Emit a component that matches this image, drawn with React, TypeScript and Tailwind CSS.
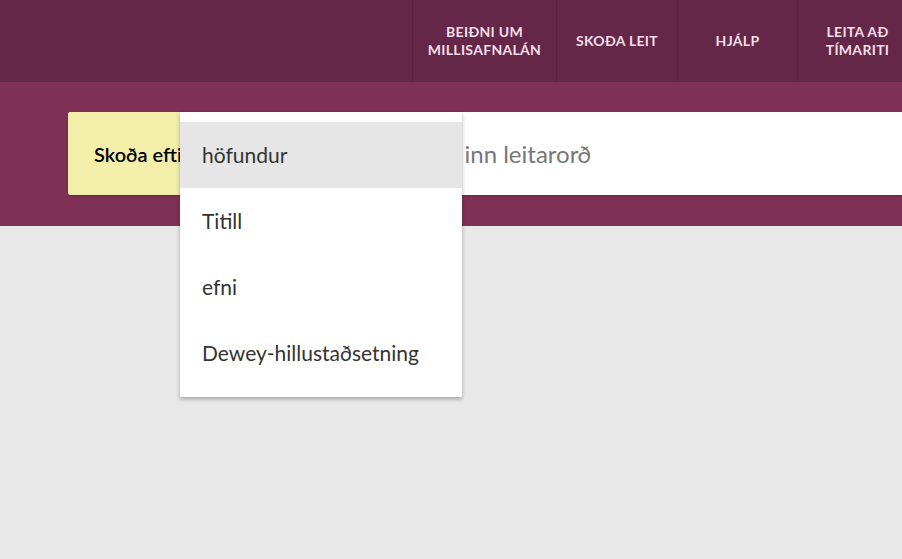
import { useState } from "react";

const navItems = [
  { label: ["Beiðni um", "millisafnalán"], w: "w-[144px]" },
  { label: ["Skoða leit"], w: "w-[121px]" },
  { label: ["Hjálp"], w: "w-[120px]" },
  { label: ["Leita að", "tímariti"], w: "w-[120px]" },
];

const options = ["höfundur", "Titill", "efni", "Dewey-hillustaðsetning"];

export default function App() {
  const [active, setActive] = useState(0);

  return (
    <div className="min-h-[559px] overflow-hidden bg-[#e8e8e8] font-['Lato','Noto_Sans',sans-serif]">
      <header className="flex h-[82px] overflow-hidden bg-[#652747]">
        <div className="w-[412px] shrink-0" />
        {navItems.map((item) => (
          <a
            key={item.label.join(" ")}
            href="#"
            className={`${item.w} flex shrink-0 flex-col items-center justify-center border-l border-[#5c2240] text-center text-[14px] font-bold uppercase leading-[18px] tracking-[0.3px] text-[#f3dfea]`}
          >
            {item.label.map((l) => (
              <span key={l}>{l}</span>
            ))}
          </a>
        ))}
      </header>

      <section className="h-[144px] bg-[#7e3055] pl-[68px] pt-[30px]">
        <div className="relative flex h-[83px] rounded-l-[3px] bg-white shadow-[0_1px_2px_rgba(0,0,0,0.2)]">
          <div className="flex w-[260px] shrink-0 items-center rounded-l-[3px] bg-[#f3eeaa] pl-[26px] text-[20px] font-semibold text-black">
            Skoða eftir höfundur
          </div>
          <input
            className="flex-1 bg-transparent pl-[73px] text-[24px] text-[#444] outline-none placeholder:text-[#777]"
            placeholder="Sláðu inn leitarorð"
          />

          <ul className="absolute left-[112px] top-0 z-10 w-[282px] bg-white pb-[11px] pt-[10px] shadow-[0_2px_4px_rgba(0,0,0,0.3)]">
            {options.map((o, i) => (
              <li
                key={o}
                onMouseEnter={() => setActive(i)}
                className={`flex h-[66px] cursor-pointer items-center px-[22px] text-[21px] text-[#333] ${
                  active === i ? "bg-[#e6e6e6]" : ""
                }`}
              >
                {o}
              </li>
            ))}
          </ul>
        </div>
      </section>
    </div>
  );
}
